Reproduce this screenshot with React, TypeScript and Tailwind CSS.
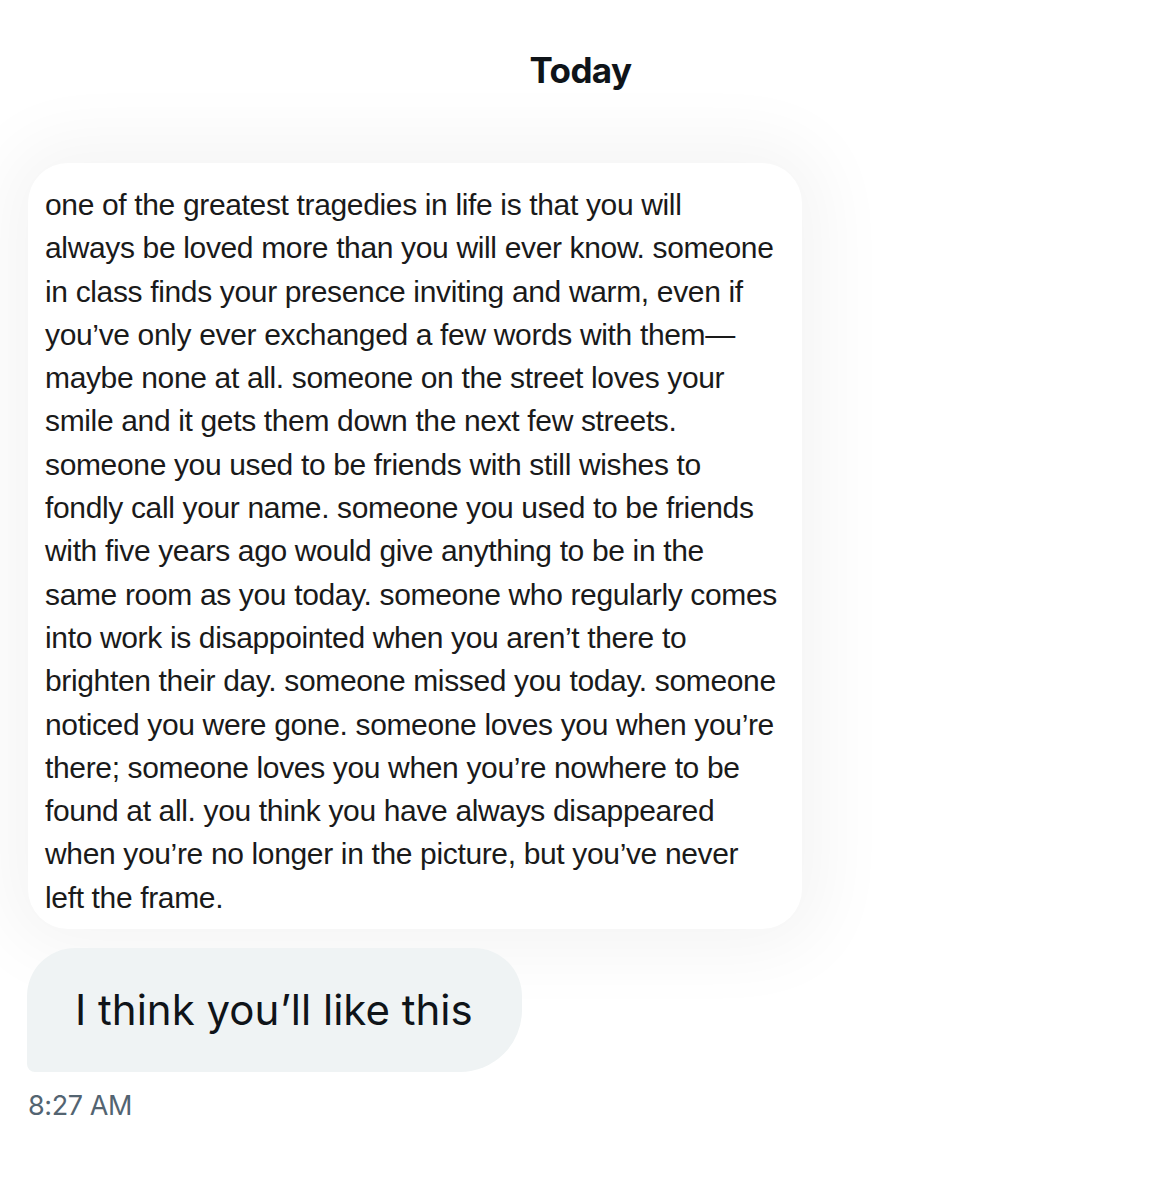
import React from "react";

const lines = [
  "one of the greatest tragedies in life is that you will",
  "always be loved more than you will ever know. someone",
  "in class finds your presence inviting and warm, even if",
  "you’ve only ever exchanged a few words with them—",
  "maybe none at all. someone on the street loves your",
  "smile and it gets them down the next few streets.",
  "someone you used to be friends with still wishes to",
  "fondly call your name. someone you used to be friends",
  "with five years ago would give anything to be in the",
  "same room as you today. someone who regularly comes",
  "into work is disappointed when you aren’t there to",
  "brighten their day. someone missed you today. someone",
  "noticed you were gone. someone loves you when you’re",
  "there; someone loves you when you’re nowhere to be",
  "found at all. you think you have always disappeared",
  "when you’re no longer in the picture, but you’ve never",
  "left the frame.",
];

const App = () => {
  return (
    <div className="w-[1159px] h-[1200px] bg-white font-['Inter',sans-serif] text-[#0f1419] overflow-hidden">
      <div className="pt-[50px] text-center">
        <h2 className="text-[35px] leading-[40px] font-bold tracking-[-0.6px] ml-[2px]">Today</h2>
      </div>
      <div className="mt-[73px] ml-[28px] w-[774px] rounded-[40px] bg-white shadow-[0_0_70px_24px_rgba(0,0,0,0.045)] pt-[20px] pb-[10px] pl-[17px]">
        <div className="font-['Liberation_Sans',sans-serif] text-[30px] leading-[43.3px] tracking-[-0.35px] text-[#1a1a1a]">
          {lines.map((l, i) => (
            <div key={i}>{l}</div>
          ))}
        </div>
      </div>
      <div className="mt-[19px] ml-[27px] w-[495px] h-[124px] bg-[#eff3f4] rounded-t-[48px] rounded-br-[62px] rounded-bl-[8px] flex items-center pl-[48px]">
        <span className="text-[42px] leading-none tracking-[0px]">I think you’ll like this</span>
      </div>
      <div className="mt-[14px] ml-[28px] text-[27px] text-[#536471] tracking-[-0.4px]">8:27 AM</div>
    </div>
  );
};

export default App;
